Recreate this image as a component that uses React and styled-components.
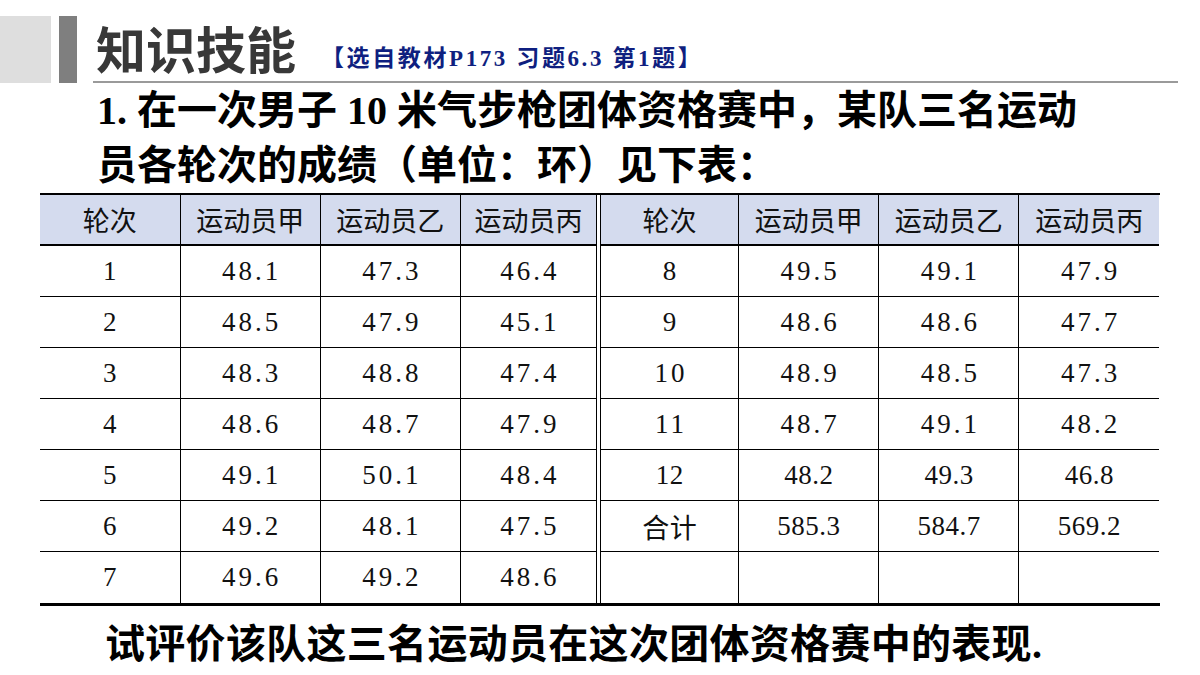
import React from "react";
import styled, { createGlobalStyle } from "styled-components";

const GlobalStyle = createGlobalStyle`
  html, body { margin: 0; padding: 0; background: #fff; }
  body { font-family: "Noto Sans CJK SC", "Noto Sans", sans-serif; }
`;

const Page = styled.div`
  width: 1200px;
  height: 675px;
  background: #fff;
  overflow: hidden;
  display: flex;
  flex-direction: column;
`;

const Header = styled.header`
  display: flex;
  padding-top: 16px;
  padding-right: 22px;
`;

const Block = styled.div`
  width: ${(p) => p.$w}px;
  height: 67px;
  margin-left: ${(p) => p.$ml || 0}px;
  background: ${(p) => p.$color};
  flex: none;
`;

const TitleArea = styled.div`
  flex: 1;
  margin-left: 16px;
  display: flex;
  flex-direction: column;
`;

const TitleRow = styled.div`
  height: 65px;
  display: flex;
  align-items: flex-end;
`;

const Title = styled.h1`
  margin: 0 0 9px 3px;
  font-family: "Noto Sans CJK SC", sans-serif;
  font-weight: 700;
  font-size: 50px;
  line-height: 50px;
  color: #383838;
`;

const Source = styled.span`
  margin: 0 0 10px 25px;
  font-family: "Liberation Serif", "Noto Sans CJK SC", serif;
  font-weight: 700;
  font-size: 23px;
  line-height: 24px;
  letter-spacing: 2.6px;
  color: #0f1f80;
`;

const Rule = styled.div`
  height: 2px;
  background: #9a9a9a;
`;

const Question = styled.p`
  margin: 0;
  padding-left: 97px;
  font-family: "Liberation Serif", "Noto Sans CJK SC", serif;
  font-weight: 700;
  font-size: 40px;
  line-height: 55px;
  color: #000;
`;

const TableWrap = styled.div`
  margin: 0 0 0 40px;
  width: 1120px;
  border-top: 2px solid #000;
  border-bottom: 3px solid #000;
  display: flex;
  gap: 3px;
`;

const Table = styled.table`
  border-collapse: collapse;
  table-layout: fixed;
  width: ${(p) => p.$w}px;
  ${(p) => (p.$side === "left" ? "border-right: 1px solid #000;" : "border-left: 1px solid #000;")}
`;

const HeadCell = styled.th`
  height: 49px;
  padding: 0;
  background: #d4dbee;
  border-bottom: 2px solid #000;
  border-left: ${(p) => (p.$first ? "none" : "1px solid #000")};
  font-family: "Noto Sans CJK SC", sans-serif;
  font-weight: 400;
  font-size: 27px;
  color: #111;
  text-align: center;
`;

const Row = styled.tr`
  height: 51px;
  border-bottom: ${(p) => (p.$last ? "none" : "1px solid #000")};
`;

const Cell = styled.td`
  padding: 0;
  height: 50px;
  border-left: ${(p) => (p.$first ? "none" : "1px solid #000")};
  font-family: "Liberation Serif", "Noto Sans CJK SC", serif;
  font-size: 27px;
  letter-spacing: ${(p) => (p.$tight ? "0.5px" : "3px")};
  text-indent: ${(p) => (p.$tight ? "0.5px" : "3px")};
  color: #111;
  text-align: center;
`;

const Closing = styled.p`
  margin: 11px 0 0 0;
  padding-left: 105px;
  font-family: "Liberation Serif", "Noto Sans CJK SC", serif;
  font-weight: 700;
  font-size: 40px;
  line-height: 56px;
  letter-spacing: 0.3px;
  color: #000;
`;

const headers = ["轮次", "运动员甲", "运动员乙", "运动员丙"];

const leftRows = [
  ["1", "48.1", "47.3", "46.4"],
  ["2", "48.5", "47.9", "45.1"],
  ["3", "48.3", "48.8", "47.4"],
  ["4", "48.6", "48.7", "47.9"],
  ["5", "49.1", "50.1", "48.4"],
  ["6", "49.2", "48.1", "47.5"],
  ["7", "49.6", "49.2", "48.6"],
];

const rightRows = [
  ["8", "49.5", "49.1", "47.9"],
  ["9", "48.6", "48.6", "47.7"],
  ["10", "48.9", "48.5", "47.3"],
  ["11", "48.7", "49.1", "48.2"],
  ["12", "48.2", "49.3", "46.8", true],
  ["合计", "585.3", "584.7", "569.2", true],
  ["", "", "", ""],
];

function ScoreTable({ rows, widths, side }) {
  const total = widths.reduce((a, b) => a + b, 0) + 1;
  return (
    <Table $w={total} $side={side}>
      <colgroup>
        {widths.map((w, i) => (
          <col key={i} style={{ width: w }} />
        ))}
      </colgroup>
      <thead>
        <tr>
          {headers.map((h, i) => (
            <HeadCell key={h} $first={i === 0}>
              {h}
            </HeadCell>
          ))}
        </tr>
      </thead>
      <tbody>
        {rows.map((r, ri) => (
          <Row key={ri} $last={ri === rows.length - 1}>
            {r.slice(0, 4).map((c, ci) => (
              <Cell key={ci} $first={ci === 0} $tight={!!r[4]}>
                {c}
              </Cell>
            ))}
          </Row>
        ))}
      </tbody>
    </Table>
  );
}

export default function App() {
  return (
    <>
      <GlobalStyle />
      <Page>
        <Header>
          <Block $w={51} $color="#dedede" />
          <Block $w={18} $ml={8} $color="#7f7f7f" />
          <TitleArea>
            <TitleRow>
              <Title>知识技能</Title>
              <Source>【选自教材P173 习题6.3 第1题】</Source>
            </TitleRow>
            <Rule />
          </TitleArea>
        </Header>
        <Question>
          1. 在一次男子 10 米气步枪团体资格赛中，某队三名运动
          <br />
          员各轮次的成绩（单位：环）见下表：
        </Question>
        <TableWrap>
          <ScoreTable rows={leftRows} widths={[140, 140, 140, 136]} side="left" />
          <ScoreTable rows={rightRows} widths={[138, 140, 140, 140]} side="right" />
        </TableWrap>
        <Closing>试评价该队这三名运动员在这次团体资格赛中的表现.</Closing>
      </Page>
    </>
  );
}
